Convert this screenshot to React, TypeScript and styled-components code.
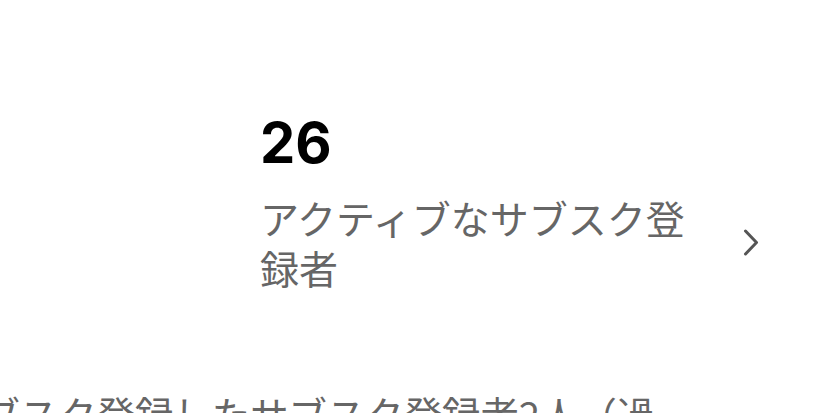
import styled, { createGlobalStyle } from 'styled-components'

const GlobalStyle = createGlobalStyle`
  html, body {
    margin: 0;
    padding: 0;
    background: #ffffff;
  }
  body {
    font-family: "Noto Sans", "Noto Sans CJK JP", sans-serif;
    overflow: hidden;
  }
`

export default function App() {
  return (
    <>
      <GlobalStyle />
      <Page>
        <StatCard>
          <StatValue>26</StatValue>
          <StatRow>
            <StatLabel>アクティブなサブスク登録者</StatLabel>
            <Chevron viewBox="0 0 16 27" aria-hidden="true">
              <path
                d="M2.5 2 L13.5 13.5 L2.5 25"
                fill="none"
                stroke="#555555"
                strokeWidth="3"
                strokeLinecap="round"
                strokeLinejoin="round"
              />
            </Chevron>
          </StatRow>
        </StatCard>
        <Footnote>サブスク登録したサブスク登録者2人（過去30日間）</Footnote>
      </Page>
    </>
  )
}

const Page = styled.div`
  width: 825px;
  height: 413px;
  overflow: hidden;
  display: flex;
  flex-direction: column;
  padding-top: 111px;
  box-sizing: border-box;
`

const StatCard = styled.section`
  display: flex;
  flex-direction: column;
  padding-left: 260px;
  padding-right: 66px;
  gap: 17px;
`

const StatValue = styled.div`
  font-family: Inter, "Noto Sans", sans-serif;
  font-weight: 700;
  font-size: 56px;
  line-height: 64px;
  color: #000000;
`

const StatRow = styled.div`
  display: flex;
  align-items: center;
  justify-content: space-between;
`

const StatLabel = styled.div`
  width: 445px;
  font-family: "Noto Sans CJK JP", sans-serif;
  font-size: 39px;
  line-height: 50px;
  color: #666666;
`

const Chevron = styled.svg`
  width: 16px;
  height: 27px;
  flex-shrink: 0;
`

const Footnote = styled.p`
  width: 720px;
  margin: 96px 0 0 -57px;
  font-family: "Noto Sans CJK JP", sans-serif;
  font-size: 38.4px;
  line-height: 51px;
  color: #666666;
`
